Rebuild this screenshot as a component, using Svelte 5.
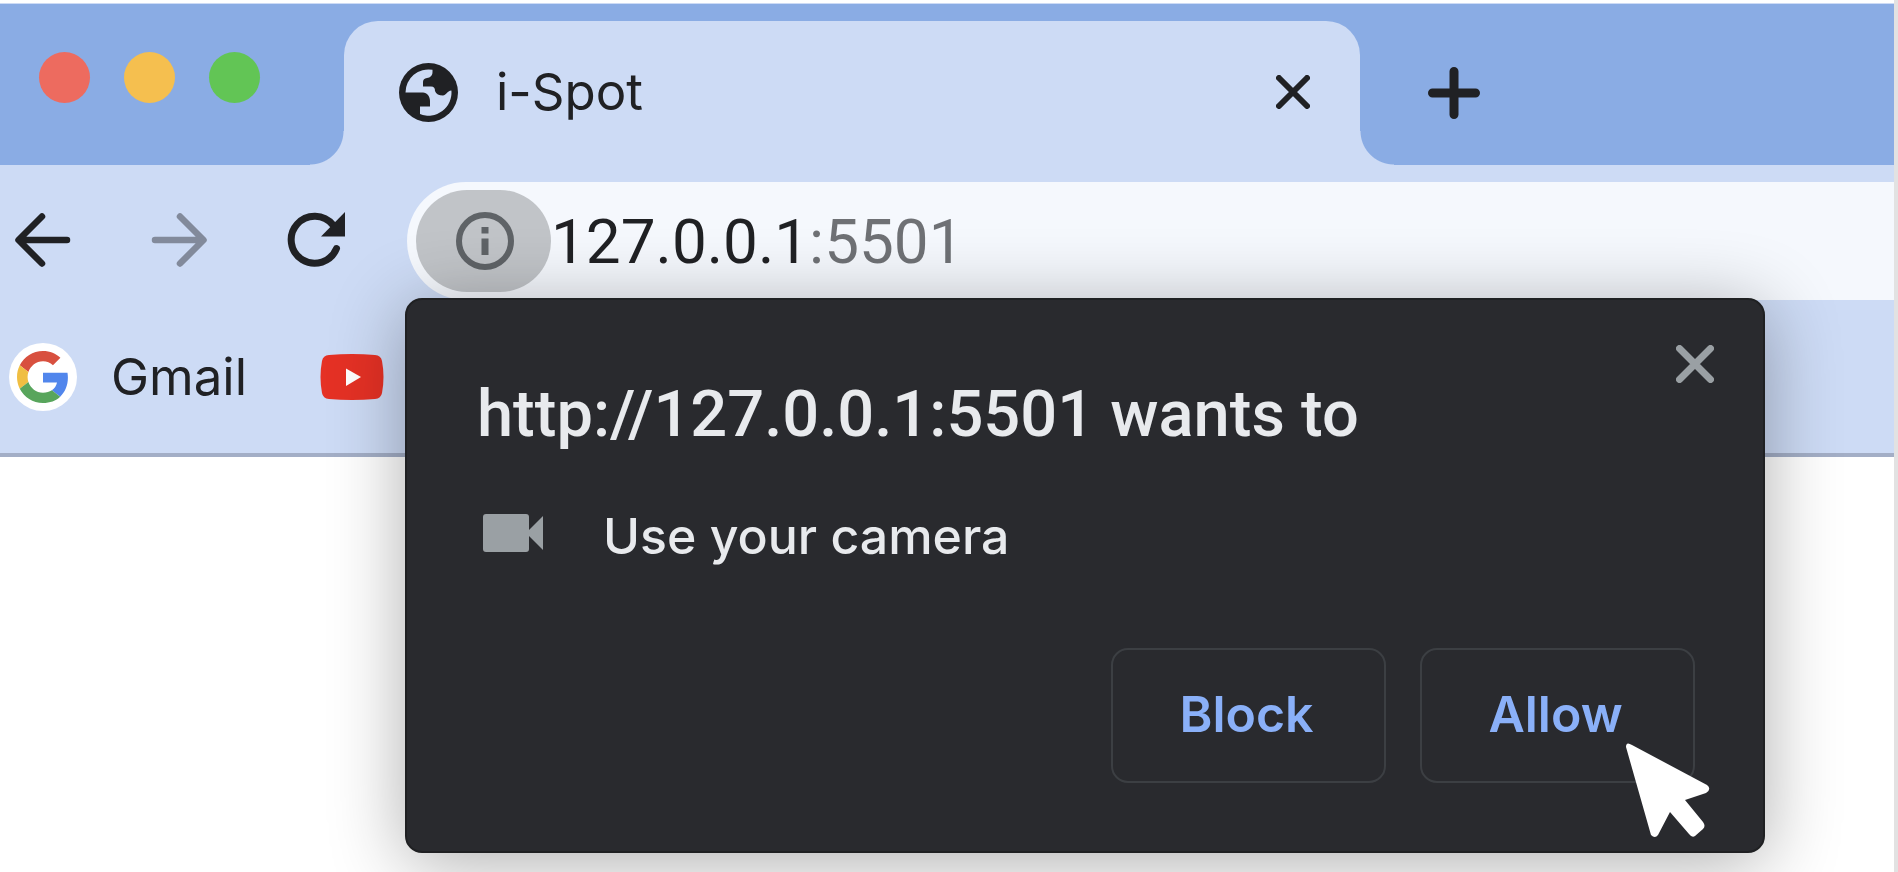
<script>
  let url = $state('127.0.0.1:5501');
</script>

<div class="window">
  <header class="tabs">
    <div class="lights">
      <button class="light red" aria-label="Close window"></button>
      <button class="light yellow" aria-label="Minimize window"></button>
      <button class="light green" aria-label="Zoom window"></button>
    </div>
    <div class="tab">
      <svg class="globe" viewBox="0 0 59 59" aria-hidden="true">
        <circle cx="29.5" cy="29.5" r="29.5" fill="#202124" />
        <path fill="#cddbf5" d="M6.5 29.5A23 23 0 0 1 33.500 6.800V9C33.500 13 31 14.500 28 15Q24 15.500 24 19V23.500H32C35 23.500 36 25 36 28C37 31 40 32.500 44 32.500C47 32.500 48 28 52.400 27.500A23 23 0 0 1 21 51V43.500H31V38C31 33 28 30 24 29.500Z" />
      </svg>
      <span class="tab-title">i-Spot</span>
      <button class="icon" aria-label="Close tab">
        <svg width="34" height="34" viewBox="0 0 34 34"><path d="M3 3L31 31M31 3L3 31" stroke="#202124" stroke-width="6" stroke-linecap="round" /></svg>
      </button>
    </div>
    <button class="icon new-tab" aria-label="New tab">
      <svg width="52" height="52" viewBox="0 0 52 52"><path d="M26 4.500V47.500M4.500 26H47.500" stroke="#202124" stroke-width="9" stroke-linecap="round" /></svg>
    </button>
  </header>

  <nav class="toolbar">
    <div class="nav">
      <button class="icon" aria-label="Back">
        <svg width="56" height="54" viewBox="0 0 56 54"><path d="M27 3.500L3.500 27L27 50.500M4 27H52" fill="none" stroke="#202124" stroke-width="6.500" stroke-linecap="round" stroke-linejoin="round" /></svg>
      </button>
      <button class="icon" aria-label="Forward">
        <svg width="56" height="54" viewBox="0 0 56 54"><path d="M29 3.500L52.500 27L29 50.500M52 27H4" fill="none" stroke="#828a9b" stroke-width="6.500" stroke-linecap="round" stroke-linejoin="round" /></svg>
      </button>
      <button class="icon" aria-label="Reload">
        <svg width="58" height="56" viewBox="0 0 58 56"><path d="M49.500 36.500A23.500 23.500 0 1 1 46 13" fill="none" stroke="#202124" stroke-width="7" stroke-linecap="round" /><path d="M58 0V24.500H34Z" fill="#202124" /></svg>
      </button>
    </div>
    <div class="omnibox">
      <button class="chip" aria-label="View site information">
        <svg width="58" height="58" viewBox="0 0 58 58"><circle cx="29" cy="29" r="26" fill="none" stroke="#5f6367" stroke-width="6" /><path d="M29 15V21.500M29 26.500V43" stroke="#5f6367" stroke-width="7" /></svg>
      </button>
      <input class="url" type="text" aria-label="Address" bind:value={url} />
    </div>
  </nav>

  <div class="bookmarks">
    <a class="bookmark" href="#gmail">
      <span class="google">
        <svg width="52" height="52" viewBox="0 0 48 48" aria-hidden="true">
          <path fill="#d8503f" d="M24 9.500c3.540 0 6.710 1.220 9.210 3.600l6.850-6.850C35.900 2.380 30.470 0 24 0 14.620 0 6.510 5.380 2.560 13.220l7.980 6.190C12.430 13.720 17.740 9.500 24 9.500z" />
          <path fill="#5186ec" d="M46.980 24.550c0-1.570-.15-3.090-.38-4.550H24v9.020h12.940c-.58 2.960-2.260 5.480-4.780 7.180l7.730 6c4.510-4.180 7.090-10.360 7.090-17.650z" />
          <path fill="#f0be42" d="M10.530 28.590c-.48-1.450-.76-2.990-.76-4.590s.27-3.140.76-4.590l-7.980-6.190C.92 16.460 0 20.120 0 24c0 3.880.92 7.540 2.560 10.780l7.970-6.190z" />
          <path fill="#58a55c" d="M24 48c6.480 0 11.930-2.130 15.890-5.810l-7.730-6c-2.150 1.450-4.920 2.300-8.160 2.300-6.260 0-11.570-4.220-13.470-9.910l-7.980 6.190C6.510 42.620 14.620 48 24 48z" />
        </svg>
      </span>
      <span>Gmail</span>
    </a>
    <a class="bookmark" href="#youtube" aria-label="YouTube">
      <svg width="64" height="46" viewBox="0 0 64 46"><path fill="#e53125" d="M9 1Q32-1 55 1Q61 1.500 62 7Q65 23 62 39Q61 44.500 55 45Q32 47 9 45Q3 44.500 2 39Q-1 23 2 7Q3 1.500 9 1Z" /><path fill="#fff" d="M26 14.500L41 23L26 32Z" /></svg>
    </a>
  </div>

  <div class="prompt" role="dialog" aria-labelledby="prompt-title">
    <button class="icon dismiss" aria-label="Close">
      <svg width="38" height="38" viewBox="0 0 38 38"><path d="M3.500 3.500L34.500 34.500M34.500 3.500L3.500 34.500" stroke="#9aa0a4" stroke-width="7" stroke-linecap="round" /></svg>
    </button>
    <h1 id="prompt-title">http://127.0.0.1:5501 wants to</h1>
    <p>
      <svg class="camera" width="60" height="38" viewBox="0 0 60 38" aria-hidden="true"><rect width="46" height="38" rx="3" fill="#9aa0a4" /><path d="M45 17L60 2V36L45 21Z" fill="#9aa0a4" /></svg>
      <span>Use your camera</span>
    </p>
    <div class="actions">
      <button>Block</button>
      <button>Allow</button>
    </div>
    <svg class="pointer" viewBox="0 0 88 98" aria-hidden="true">
      <path fill="#fff" d="M2 5Q2-1 8 3L83 43Q88 47 82 51L61 58L79 80Q82 84 79 87L71 94Q68 96 65 92L46 70L34 93Q31 97 27 93Z" />
    </svg>
  </div>
</div>

<style>
  :global(body) {
    margin: 0;
    background: #fff;
  }

  .window {
    position: relative;
    box-sizing: border-box;
    min-height: 100vh;
    overflow: hidden;
    padding-top: 3px;
    border-right: 4px solid #e2e2e2;
    font-family: Inter, "Liberation Sans", sans-serif;
    font-size: 51px;
    line-height: 60px;
    color: #202124;
  }

  button {
    box-sizing: border-box;
    margin: 0;
    padding: 0;
    border: 0;
    background: none;
    font: inherit;
    color: inherit;
  }

  svg {
    display: block;
    flex: none;
  }

  .icon {
    flex: none;
  }

  .tabs {
    display: flex;
    height: 161px;
    border-top: 1px solid #cddbf5;
    background: #8aace4;
  }

  .lights {
    display: flex;
    flex: none;
    gap: 34px;
    padding: 48px 84px 0 39px;
  }

  .light {
    width: 51px;
    height: 51px;
    border-radius: 50%;
  }

  .red { background: #ed6b5f; }
  .yellow { background: #f5bf4f; }
  .green { background: #62c555; }

  .tab {
    position: relative;
    display: flex;
    flex: 0 1 1016px;
    align-items: center;
    box-sizing: border-box;
    margin-top: 17px;
    padding: 0 50px 2px 55px;
    border-radius: 34px 34px 0 0;
    background: #cddbf5;
  }

  .tab::before,
  .tab::after {
    content: "";
    position: absolute;
    bottom: 0;
    width: 34px;
    height: 34px;
  }

  .tab::before {
    right: 100%;
    background: radial-gradient(circle at 0 0, transparent 33px, #cddbf5 34px);
  }

  .tab::after {
    left: 100%;
    background: radial-gradient(circle at 100% 0, transparent 33px, #cddbf5 34px);
  }

  .globe {
    width: 59px;
    height: 59px;
  }

  .tab-title {
    flex: 1;
    margin-left: 38px;
  }

  .new-tab {
    align-self: center;
    margin: 16px 0 0 68px;
  }

  .toolbar {
    display: flex;
    align-items: center;
    padding-top: 17px;
    background: #cddbf5;
  }

  .nav {
    display: flex;
    flex: none;
    gap: 80px;
    padding: 0 62px 2px 15px;
  }

  .omnibox {
    display: flex;
    flex: 1;
    align-items: center;
    height: 118px;
    padding-left: 9px;
    border-radius: 59px 0 0 59px;
    background: #f5f8fd;
  }

  .chip {
    display: grid;
    flex: none;
    place-items: center;
    width: 135px;
    height: 102px;
    padding-left: 2px;
    border-radius: 51px;
    background: #c1c4c8;
  }

  .url {
    flex: 1;
    min-width: 0;
    height: 74px;
    padding: 0;
    border: 0;
    outline: 0;
    background: linear-gradient(90deg, #202124 257px, #6f7175 257px);
    background-clip: text;
    -webkit-background-clip: text;
    color: transparent;
    caret-color: #202124;
    font: inherit;
    font-family: Roboto, Inter, sans-serif;
    font-size: 62px;
  }

  .bookmarks {
    display: flex;
    align-items: center;
    gap: 73px;
    height: 153px;
    padding-left: 9px;
    border-bottom: 4px solid #a3aec6;
    background: #cddbf5;
  }

  .bookmark {
    display: flex;
    align-items: center;
    gap: 34px;
    color: inherit;
    text-decoration: none;
  }

  .google {
    display: grid;
    place-items: center;
    width: 68px;
    height: 68px;
    border-radius: 50%;
    background: #fff;
  }

  .prompt {
    position: absolute;
    top: 298px;
    left: 405px;
    right: 129px;
    box-sizing: border-box;
    padding: 76px 68px 68px 70px;
    border: 2px solid #1f2022;
    border-radius: 17px;
    background: #292a2e;
    box-shadow: 0 10px 76px rgba(0, 0, 0, 0.32);
    color: #e8eaed;
  }

  .dismiss {
    position: absolute;
    top: 45px;
    right: 49px;
  }

  h1 {
    margin: 0;
    font-family: Roboto, Inter, sans-serif;
    font-size: 65px;
    font-weight: 500;
    line-height: 76px;
  }

  p {
    display: flex;
    align-items: center;
    gap: 60px;
    margin: 54px 0 82px;
    padding-left: 6px;
    font-size: 50px;
    font-weight: 500;
  }

  .camera {
    margin-bottom: 6px;
  }

  .actions {
    display: flex;
    justify-content: flex-end;
    gap: 34px;
  }

  .actions button {
    width: 275px;
    height: 135px;
    padding: 0 4px 4px 0;
    border: 2px solid #3c3f43;
    border-radius: 17px;
    color: #8ab0f8;
    font-size: 50px;
    font-weight: 600;
  }

  .pointer {
    position: absolute;
    right: 51px;
    bottom: 11px;
    width: 88px;
    height: 98px;
  }
</style>
